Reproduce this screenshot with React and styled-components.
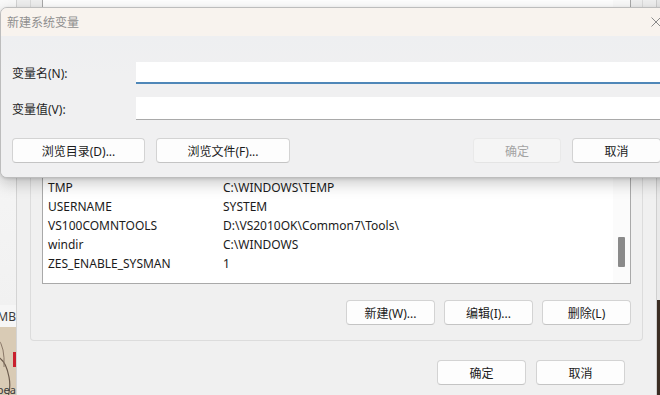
import React from 'react';
import styled, { createGlobalStyle } from 'styled-components';

const GlobalStyle = createGlobalStyle`
  html, body {
    margin: 0;
    padding: 0;
    background: #f0f0f0;
  }
`;

const Screen = styled.div`
  position: relative;
  width: 660px;
  height: 395px;
  overflow: hidden;
  display: flex;
  font-family: "Noto Sans", "Noto Sans CJK SC", sans-serif;
  font-size: 12px;
  color: #1b1b1b;
`;

/* window peeking in on the left */
const LeftStrip = styled.div`
  width: 16px;
  flex: none;
  display: flex;
  flex-direction: column;
  background: #f6f6f6;
  overflow: hidden;
`;

const StripFill = styled.div`
  flex: 1;
  background: linear-gradient(#fafafa, #f1f1f1);
`;

const SizeText = styled.div`
  height: 22px;
  display: flex;
  align-items: center;
  justify-content: flex-end;
  font-size: 12px;
  color: #3c3c3c;
  white-space: nowrap;
`;

const Photo = styled.div`
  position: relative;
  height: 68px;
  background: #d8cab4;
  overflow: hidden;
`;

const Caption = styled.span`
  position: absolute;
  right: 0;
  bottom: -2px;
  font-size: 11px;
  color: #3a3a3a;
  white-space: nowrap;
`;

/* environment variables window behind */
const EnvWindow = styled.div`
  width: 641px;
  flex: none;
  box-sizing: border-box;
  display: flex;
  flex-direction: column;
  background: #f0f0f0;
  border-left: 1px solid #d4d4d4;
  border-right: 1px solid #cfcfcf;
  padding: 0 13px;
`;

const GroupBox = styled.div`
  flex: 1;
  min-height: 0;
  display: flex;
  flex-direction: column;
  border: 1px solid #dcdcdc;
  border-top: none;
  border-radius: 0 0 4px 4px;
  padding: 0 11px 15px 11px;
`;

const ListBox = styled.div`
  flex: 1;
  min-height: 0;
  display: flex;
  background: #fff;
  border: 1px solid #a9a9a9;
  border-top: none;
  overflow: hidden;
`;

const Rows = styled.div`
  flex: 1;
  display: flex;
  flex-direction: column;
  justify-content: flex-end;
  padding: 0 0 10px 5px;
  overflow: hidden;
`;

const Row = styled.div`
  display: flex;
  flex: none;
  height: 19px;
  align-items: center;
  white-space: nowrap;
`;

const NameCell = styled.span`
  width: 175px;
  flex: none;
`;

const ScrollTrack = styled.div`
  width: 17px;
  flex: none;
  display: flex;
  flex-direction: column;
  justify-content: flex-end;
  align-items: center;
  padding-bottom: 16px;
  background: #fbfbfb;
`;

const Thumb = styled.div`
  width: 7px;
  height: 30px;
  border-radius: 1px;
  background: #8a8a8a;
`;

const ButtonRow = styled.div`
  display: flex;
  justify-content: flex-end;
  align-items: center;
  gap: ${p => p.$gap || 9}px;
  margin-top: ${p => p.$top || 0}px;
  margin-right: ${p => p.$right || 0}px;
  flex: none;
`;

const Button = styled.div`
  box-sizing: border-box;
  width: ${p => p.$w || 89}px;
  height: 25px;
  display: flex;
  align-items: center;
  justify-content: center;
  background: ${p => (p.$disabled ? '#f5f5f5' : '#fdfdfd')};
  color: ${p => (p.$disabled ? '#a3a3a3' : '#1b1b1b')};
  border: 1px solid ${p => (p.$disabled ? '#e9e9e9' : '#d3d3d3')};
  border-bottom-color: ${p => (p.$disabled ? '#e4e4e4' : '#c4c4c4')};
  border-radius: 4px;
  font-size: 12px;
  white-space: nowrap;
`;

const BottomBar = styled.div`
  height: 54px;
  flex: none;
  display: flex;
  flex-direction: column;
  padding-top: 19px;
  box-sizing: border-box;
`;

const RightStrip = styled.div`
  flex: 1;
  display: flex;
  flex-direction: column;
`;

const RightTop = styled.div`
  flex: 1;
  background: #e9e9e9;
`;

const RightBottom = styled.div`
  height: 95px;
  background: #3b2d23;
`;

/* the modal on top */
const Dialog = styled.div`
  position: absolute;
  top: 7px;
  left: 0;
  width: 677px;
  height: 171px;
  box-sizing: border-box;
  display: flex;
  flex-direction: column;
  background: #f0f0f1;
  border: 1px solid #bdbdbd;
  border-radius: 7px;
  box-shadow: 0 5px 16px rgba(0, 0, 0, 0.22), 0 1px 3px rgba(0, 0, 0, 0.12);
  overflow: hidden;
`;

const TitleBar = styled.div`
  height: 28px;
  flex: none;
  display: flex;
  align-items: center;
  justify-content: space-between;
  padding-left: 6px;
  background: #f8f3ee;
  color: #8f8f8f;
  font-size: 12px;
`;

const CloseButton = styled.div`
  width: 40px;
  height: 28px;
  display: flex;
  align-items: center;
  justify-content: center;
`;

const Body = styled.div`
  flex: 1;
  display: flex;
  flex-direction: column;
  padding: 26px 15px 0 11px;
  background: linear-gradient(#eeeff1, #f0f0f1 40px);
`;

const Form = styled.div`
  display: grid;
  grid-template-columns: 124px 1fr;
  row-gap: 13px;
  align-items: center;
`;

const Label = styled.div`
  font-size: 12px;
  color: #1f1f1f;
`;

const Field = styled.div`
  height: ${p => (p.$focused ? 20 : 22)}px;
  background: #fff;
  border-bottom: ${p => (p.$focused ? '2px solid #4f87b8' : '1px solid #a9a9a9')};
`;

const Spacer = styled.div`
  flex: 1;
`;

const vars = [
  ['PATHEXT', '.COM;.EXE;.BAT;.CMD;.VBS;.VBE;.JS;.JSE;.WSF;.WSH;.MSC'],
  ['PROCESSOR_ARCHITECTURE', 'AMD64'],
  ['PROCESSOR_IDENTIFIER', 'Intel64 Family 6 Model 154 Stepping 3, GenuineIntel'],
  ['PROCESSOR_LEVEL', '6'],
  ['PROCESSOR_REVISION', '9a03'],
  ['PSModulePath', '%ProgramFiles%\\WindowsPowerShell\\Modules'],
  ['TEMP', 'C:\\WINDOWS\\TEMP'],
  ['TMP', 'C:\\WINDOWS\\TEMP'],
  ['USERNAME', 'SYSTEM'],
  ['VS100COMNTOOLS', 'D:\\VS2010OK\\Common7\\Tools\\'],
  ['windir', 'C:\\WINDOWS'],
  ['ZES_ENABLE_SYSMAN', '1'],
];

const CloseIcon = () => (
  <svg width="10" height="10" viewBox="0 0 10 10">
    <path d="M0.5 0.5 L9.5 9.5 M9.5 0.5 L0.5 9.5" stroke="#8a8a8a" strokeWidth="1" fill="none" />
  </svg>
);

const PhotoArt = () => (
  <svg width="16" height="68" viewBox="0 0 16 68">
    <rect width="16" height="68" fill="#d9cbb5" />
    <path d="M-2 30 Q6 34 9 50 Q11 60 8 70" stroke="#6b5a4c" strokeWidth="1.2" fill="none" />
    <path d="M-2 12 Q5 20 4 40" stroke="#8a7868" strokeWidth="1" fill="none" />
    <rect x="13" y="25" width="3" height="15" fill="#c9202e" />
  </svg>
);

export default function App() {
  return (
    <>
      <GlobalStyle />
      <Screen>
        <LeftStrip>
          <StripFill />
          <SizeText>MB</SizeText>
          <Photo>
            <PhotoArt />
            <Caption>pea</Caption>
          </Photo>
        </LeftStrip>

        <EnvWindow>
          <GroupBox>
            <ListBox>
              <Rows>
                {vars.map(([name, value]) => (
                  <Row key={name}>
                    <NameCell>{name}</NameCell>
                    <span>{value}</span>
                  </Row>
                ))}
              </Rows>
              <ScrollTrack>
                <Thumb />
              </ScrollTrack>
            </ListBox>
            <ButtonRow $top={16} $gap={9}>
              <Button>新建(W)...</Button>
              <Button>编辑(I)...</Button>
              <Button>删除(L)</Button>
            </ButtonRow>
          </GroupBox>
          <BottomBar>
            <ButtonRow $gap={10} $right={18}>
              <Button>确定</Button>
              <Button>取消</Button>
            </ButtonRow>
          </BottomBar>
        </EnvWindow>

        <RightStrip>
          <RightTop />
          <RightBottom />
        </RightStrip>

        <Dialog>
          <TitleBar>
            <span>新建系统变量</span>
            <CloseButton>
              <CloseIcon />
            </CloseButton>
          </TitleBar>
          <Body>
            <Form>
              <Label>变量名(N):</Label>
              <Field $focused />
              <Label>变量值(V):</Label>
              <Field />
            </Form>
            <ButtonRow $top={18} $gap={11}>
              <Button $w={133}>浏览目录(D)...</Button>
              <Button $w={134}>浏览文件(F)...</Button>
              <Spacer />
              <Button $w={88} $disabled>确定</Button>
              <Button $w={89}>取消</Button>
            </ButtonRow>
          </Body>
        </Dialog>
      </Screen>
    </>
  );
}
